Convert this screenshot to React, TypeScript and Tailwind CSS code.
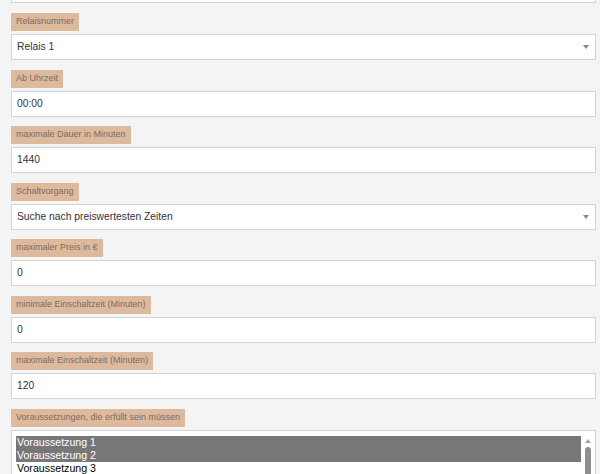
const fields = [
  { label: "Relaisnummer", value: "Relais 1", select: true },
  { label: "Ab Uhrzeit", value: "00:00" },
  { label: "maximale Dauer in Minuten", value: "1440" },
  { label: "Schaltvorgang", value: "Suche nach preiswertesten Zeiten", select: true },
  { label: "maximaler Preis in €", value: "0" },
  { label: "minimale Einschaltzeit (Minuten)", value: "0" },
  { label: "maximale Einschaltzeit (Minuten)", value: "120" },
];

const options = [
  { text: "Voraussetzung 1", selected: true },
  { text: "Voraussetzung 2", selected: true },
  { text: "Voraussetzung 3", selected: false },
];

function Label({ children }: { children: string }) {
  return (
    <div className="flex">
      <span className="flex h-[18px] items-center bg-[#ddb99d] px-[5px] text-[9px] text-[#7d6b5f]">
        {children}
      </span>
    </div>
  );
}

function Field({ label, value, select }: { label: string; value: string; select?: boolean }) {
  return (
    <div className="mb-[9.5px] flex flex-col gap-[3px]">
      <Label>{label}</Label>
      <div className="flex h-[26px] items-center justify-between border border-[#d4d4d4] bg-white pl-[5px] pr-[6px] text-[10.3px] text-[#333]">
        <span>{value}</span>
        {select && (
          <span className="h-0 w-0 border-x-[3.5px] border-t-[4px] border-x-transparent border-t-[#888]" />
        )}
      </div>
    </div>
  );
}

export default function App() {
  return (
    <div
      className="h-[474px] overflow-hidden bg-[#f4f4f4] pl-[11px] pr-[4px]"
      style={{ fontFamily: '"Liberation Sans", Arial, sans-serif' }}
    >
      <div className="-mt-[23px] mb-[10px] h-[26px] border border-[#d4d4d4] bg-white" />
      {fields.map((f) => (
        <Field key={f.label} {...f} />
      ))}
      <div className="flex flex-col gap-[3px]">
        <Label>Voraussetzungen, die erfüllt sein müssen</Label>
        <div className="flex h-[60px] border border-[#d4d4d4] bg-white pl-[4px] pt-[5px]">
          <div className="flex flex-1 flex-col">
            {options.map((o) => (
              <div
                key={o.text}
                className={
                  "flex h-[13.3px] items-center pl-[1px] text-[10.6px] leading-none " +
                  (o.selected ? "bg-[#777] text-white" : "text-black")
                }
              >
                {o.text}
              </div>
            ))}
          </div>
          <div className="flex w-[14px] flex-col items-center pt-[3px]">
            <span className="h-0 w-0 border-x-[3px] border-b-[4px] border-x-transparent border-b-[#a3a3a3]" />
            <span className="mt-[4px] h-[40px] w-[6px] rounded-full bg-[#8f8f8f]" />
          </div>
        </div>
      </div>
    </div>
  );
}
